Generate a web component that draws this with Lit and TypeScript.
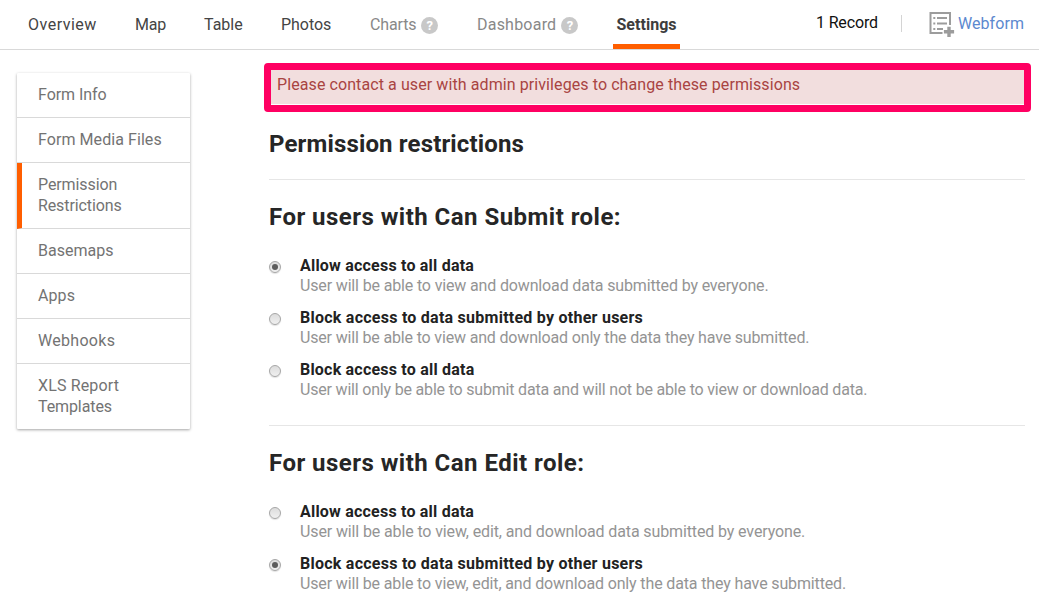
import { LitElement, html, css, svg } from "lit";
import { customElement } from "lit/decorators.js";
import { classMap } from "lit/directives/class-map.js";
import { styleMap } from "lit/directives/style-map.js";

interface Label { label: string; track: number }
interface Tab extends Label { help?: boolean; active?: boolean }
interface Option { title: Label; text: Label; checked?: boolean }

const l = (label: string, track = 0): Label => ({ label, track });

const tabs: Tab[] = [
  l("Overview", 0.5),
  l("Map", -0.15),
  l("Table"),
  l("Photos", -0.05),
  { ...l("Charts", -0.15), help: true },
  { ...l("Dashboard", 0.22), help: true },
  { ...l("Settings", 0.03), active: true },
];

const menu: Label[][] = [
  [l("Form Info", -0.05)],
  [l("Form Media Files", 0.07)],
  [l("Permission", -0.1), l("Restrictions", -0.11)],
  [l("Basemaps")],
  [l("Apps", 0.1)],
  [l("Webhooks", 0.3)],
  [l("XLS Report", 0.14), l("Templates", -0.1)],
];

const allowAll = l("Allow access to all data", 0.21);
const blockOthers = l("Block access to data submitted by other users", 0.25);
const blockAll = l("Block access to all data", 0.21);

const submitOptions: Option[] = [
  { title: allowAll, text: l("User will be able to view and download data submitted by everyone.", -0.15), checked: true },
  { title: blockOthers, text: l("User will be able to view and download only the data they have submitted.", -0.165) },
  { title: blockAll, text: l("User will only be able to submit data and will not be able to view or download data.", -0.19) },
];

const editOptions: Option[] = [
  { title: allowAll, text: l("User will be able to view, edit, and download data submitted by everyone.", -0.125) },
  { title: blockOthers, text: l("User will be able to view, edit, and download only the data they have submitted.", -0.14), checked: true },
];

const tracked = (t: Label) => html`<span style=${styleMap({ letterSpacing: `${t.track}px` })}>${t.label}</span>`;

@customElement("app-root")
export class AppRoot extends LitElement {
  static styles = css`
    :host { display: block; height: 605px; overflow: hidden; background: #fff; color: #262626;
      font-family: Roboto, "Liberation Sans", sans-serif; font-size: 16px; line-height: 20px; }
    * { box-sizing: border-box; }
    .top { display: flex; height: 50px; border-bottom: 1px solid #d9d9d9; padding-left: 28px; }
    .tabs { display: grid; grid-template-columns: 107px 69px 77px 89px 107px 136px 67px; color: #444; }
    .tab { display: flex; align-items: center; gap: 5px; white-space: nowrap; height: 49px; }
    .muted { color: #888; }
    .help { width: 17px; height: 17px; border-radius: 50%; background: #c8c8c8; color: #fff;
      font-size: 13px; font-weight: 700; line-height: 17px; text-align: center; margin-top: 2px; }
    .active { font-weight: 700; border-bottom: 5px solid #ff5e00; padding-top: 5px; justify-content: center; color: #3d3d3d; }
    .tools { display: flex; margin-left: 136px; height: 46px; align-items: center; white-space: nowrap; }
    .record { width: 85px; color: #111; }
    .rule { width: 1px; height: 17px; background: #d4d4d4; margin-right: 27px; }
    .form-icon { width: 26px; height: 26px; margin-right: 3px; margin-top: 2px; }
    .link { color: #5c89cf; margin-top: 2px; }
    .body { display: flex; }
    .side { width: 173px; margin: 23px 79px 0 17px; align-self: flex-start; background: #fff; color: #737373;
      line-height: 21px; box-shadow: 0 1px 3px rgba(0,0,0,.36); border-radius: 1px; }
    .item { padding: 11px 10px 12px 21px; border-bottom: 1px solid #d9d9d9; white-space: nowrap; }
    .item:last-child { border-bottom: 0; }
    .current { border-left: 5px solid #ff5e00; padding-left: 16px; }
    .main { width: 756px; }
    .callout { width: 767px; height: 49px; margin: 13px 0 0 -5px; border: 7px solid #ff0062; border-radius: 4px; background: #fff; }
    .alert { height: 34px; background: #f2dede; color: #a94442; padding: 5px 0 0 6px; white-space: nowrap; letter-spacing: .09px; }
    h1, h2 { font-size: 24px; line-height: 30px; font-weight: 700; margin: 0; color: #262626; white-space: nowrap; }
    h1 { margin-top: 17px; height: 51px; border-bottom: 1px solid #e6e6e6; letter-spacing: .15px; }
    h2 { margin-top: 22px; letter-spacing: .47px; }
    .group { padding: 24px 0 0; }
    .first { border-bottom: 1px solid #e6e6e6; height: 194px; }
    .option { display: grid; grid-template-columns: 31px 1fr; height: 52px; white-space: nowrap; }
    .radio { width: 12px; height: 12px; border: 1px solid #a6a6a6; border-radius: 50%; margin-top: 5px;
      background: linear-gradient(#dcdcdc, #f0f0f0); box-shadow: 0 1px 1px rgba(0,0,0,.12); display: grid; place-items: center; }
    .dot { width: 6px; height: 6px; border-radius: 50%; background: #5c5c5c; }
    .title { font-weight: 700; color: #222; }
    .text { color: #949494; }
  `;

  private option(o: Option) {
    return html`<div class="option">
      <span class="radio">${o.checked ? html`<i class="dot"></i>` : null}</span>
      <div><div class="title">${tracked(o.title)}</div><div class="text">${tracked(o.text)}</div></div>
    </div>`;
  }

  private formIcon() {
    const rows = [{ y: 6, w: 10 }, { y: 11.5, w: 10 }, { y: 17, w: 6 }];
    return html`<svg class="form-icon" viewBox="0 0 26 26" fill="#9c9c9c">
      <path d="M.5 1H22V14H20V3H2.500V21H13.500V23H.5Z" />
      ${rows.map((r) => svg`<path d=${`M4.300 ${r.y}h2v2h-2z M8 ${r.y}h${r.w}v2h-${r.w}z`} />`)}
      <path d="M18.300 15.700h3.400v3.400h3.400v3.400h-3.400v3.400h-3.400v-3.400h-3.400v-3.400h3.400z" />
    </svg>`;
  }

  render() {
    return html`
      <header class="top">
        <nav class="tabs">
          ${tabs.map((t) => html`<div class=${classMap({ tab: true, muted: !!t.help, active: !!t.active })}>
            ${tracked(t)}${t.help ? html`<span class="help">?</span>` : null}</div>`)}
        </nav>
        <div class="tools">
          <div class="record">${tracked(l("1 Record", -0.15))}</div><div class="rule"></div>${this.formIcon()}
          <div class="link">${tracked(l("Webform", 0.06))}</div>
        </div>
      </header>
      <div class="body">
        <aside class="side">
          ${menu.map((lines, i) => html`<div class=${classMap({ item: true, current: i === 2 })}>
            ${lines.map((line) => html`<div>${tracked(line)}</div>`)}</div>`)}
        </aside>
        <main class="main">
          <div class="callout"><div class="alert">Please contact a user with admin privileges to change these permissions</div></div>
          <h1>Permission restrictions</h1>
          <h2>For users with Can Submit role:</h2>
          <section class="group first">${submitOptions.map((o) => this.option(o))}</section>
          <h2>For users with Can Edit role:</h2>
          <section class="group">${editOptions.map((o) => this.option(o))}</section>
        </main>
      </div>`;
  }
}
